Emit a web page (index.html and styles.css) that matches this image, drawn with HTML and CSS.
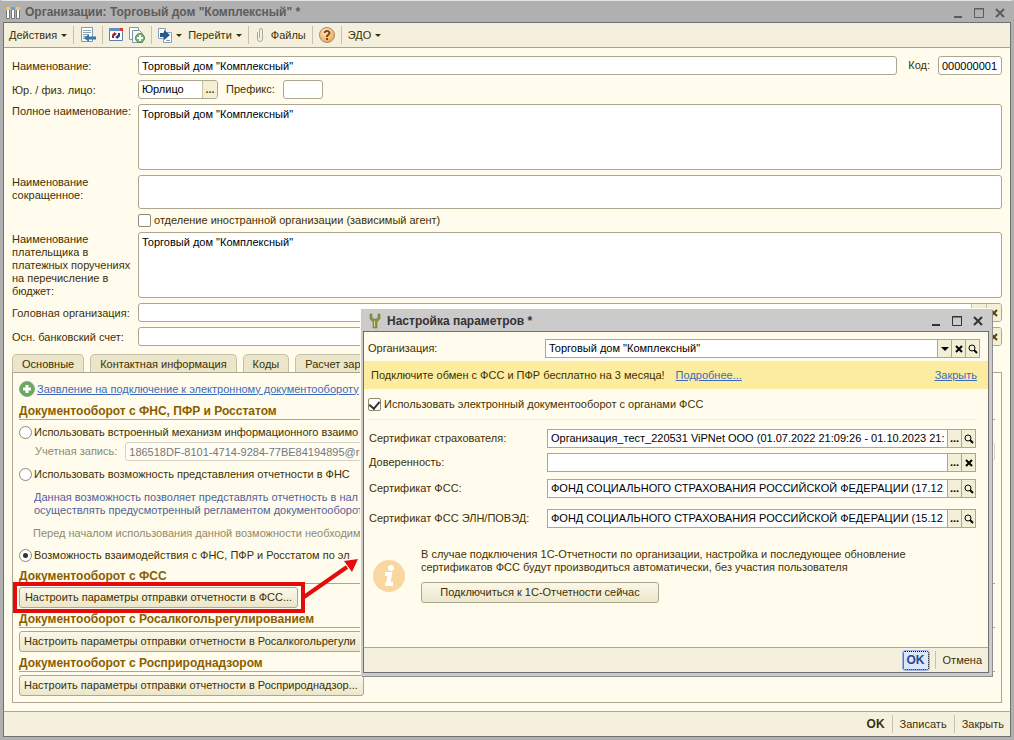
FILE: index.html
```html
<!DOCTYPE html>
<html lang="ru">
<head>
<meta charset="utf-8">
<title>Организации: Торговый дом "Комплексный"</title>
<link rel="stylesheet" href="styles.css">
</head>
<body>
<main class="window">
  <header class="titlebar">
    <svg class="icon" width="16" height="16" viewBox="0 0 16 16"><path fill="#fff" stroke="#777" d="M1.500 2.500h3v11h-3zM6.500 2.500h3v11h-3zM11.500 2.500h3v11h-3z"/><path fill="#f0c85a" d="M1 2h4v3H1zM11 2h4v3h-4z"/><path fill="#6f9fd0" d="M6 2h4v3H6z"/></svg>
    <h1 class="title">Организации: Торговый дом "Комплексный" *</h1>
    <div class="controls">
      <button class="control" aria-label="Свернуть"><svg width="12" height="12"><path d="M2 10h8" stroke="currentColor" stroke-width="2"/></svg></button>
      <button class="control" aria-label="Развернуть"><svg width="12" height="12"><path d="M1.500 1.500h9v9h-9zM1 2h10" fill="none" stroke="currentColor"/></svg></button>
      <button class="control" aria-label="Закрыть окно"><svg width="12" height="12"><path d="M2 2l8 8M10 2l-8 8" stroke="currentColor" stroke-width="2"/></svg></button>
    </div>
  </header>
  <nav class="toolbar">
    <button class="tool">Действия<span class="caret"></span></button>
    <span class="sep"></span>
    <button class="tool" aria-label="Записать и закрыть"><svg width="16" height="16"><path fill="#fff" stroke="#7899b8" d="M1.500.500h11v14h-11z"/><path stroke="#8fa3b5" d="M3 3.500h8M3 5.500h8M3 7.500h5M3 9.500h3M3 11.500h3"/><path fill="#3578a8" d="M4 11l5-4v2.500h7v3H9V15z"/></svg></button>
    <span class="sep"></span>
    <button class="tool" aria-label="Перечитать"><svg width="14" height="14"><path fill="#fff" stroke="#5a7fae" d="M.500.500h13v12H.500z"/><path fill="#5c90c8" d="M0 0h14v3H0z"/><path fill="#d33" d="M11 0h3v3h-3z"/><path fill="none" stroke="#a02030" stroke-width="2" d="M4 10V8q0-2 2-2"/><path fill="none" stroke="#203a90" stroke-width="2" d="M10 5v2q0 2-2 2"/><path fill="#a02030" d="M5 4l3 2-3 2z"/><path fill="#203a90" d="M9 7v4L6 9z"/></svg></button>
    <button class="tool" aria-label="Скопировать"><svg width="16" height="17"><path fill="#fff" stroke="#8396a5" d="M.500.500h9v12h-9z"/><path fill="#f4f8fa" stroke="#8396a5" d="M3.500 3.500h7l3 3v9h-10z"/><circle cx="11" cy="11" r="4.500" fill="#7db570" stroke="#4f8a4a"/><path stroke="#fff" stroke-width="2" d="M8 11h6M11 8v6"/></svg></button>
    <span class="sep"></span>
    <button class="tool" aria-label="Ввести на основании"><svg width="14" height="15"><path fill="#fff" stroke="#86a0b8" d="M.500.500h7v10h-7zM5.500 4.500h8v10h-8z"/><path fill="#25588c" d="M2 5h4V2l6 5-6 5V9H2z"/><path stroke="#86a0b8" d="M8 12.500h4"/></svg><span class="caret"></span></button>
    <button class="tool">Перейти<span class="caret"></span></button>
    <span class="sep"></span>
    <button class="tool files"><svg width="10" height="16"><path fill="none" stroke="#a8a8a4" d="M2.500 5v7q0 2.500 2.500 2.500T7.500 12V3Q7.500 1.500 6 1.500T4.500 3v8"/></svg>Файлы</button>
    <span class="sep"></span>
    <button class="tool" aria-label="Справка"><svg width="16" height="16"><defs><radialGradient id="orange" cx=".4" cy=".3" r=".8"><stop offset="0" stop-color="#ffe9c0"/><stop offset="1" stop-color="#f0a040"/></radialGradient></defs><circle cx="8" cy="8" r="7.500" fill="url(#orange)" stroke="#a08c78"/><path fill="none" stroke="#86471c" stroke-width="2" d="M5.500 6Q6 4 8 4t2.500 2Q10.500 7 8 9v1M8 11v2"/></svg></button>
    <span class="sep"></span>
    <button class="tool">ЭДО<span class="caret"></span></button>
  </nav>

  <form class="content">
    <div class="fields">
      <label for="name">Наименование:</label>
      <div class="line"><input id="name" class="box grow" value='Торговый дом "Комплексный"'><label class="codelabel" for="code">Код:</label><input id="code" class="box code" value="000000001"></div>
      <label for="kind">Юр. / физ. лицо:</label>
      <div class="line"><div class="box combo"><input id="kind" value="Юрлицо"><button type="button" aria-label="Выбрать">...</button></div><label class="preflabel" for="prefix">Префикс:</label><input id="prefix" class="box prefix"></div>
      <label class="top" for="full">Полное наименование:</label>
      <textarea id="full" class="box tall">Торговый дом "Комплексный"</textarea>
      <label class="top" for="short">Наименование сокращенное:</label>
      <textarea id="short" class="box short"></textarea>
      <label class="check second"><input type="checkbox">отделение иностранной организации (зависимый агент)</label>
      <label class="top" for="payer">Наименование плательщика в платежных поручениях на перечисление в бюджет:</label>
      <textarea id="payer" class="box tall">Торговый дом "Комплексный"</textarea>
      <label for="head">Головная организация:</label>
      <div class="box combo wide"><input id="head"><button type="button" aria-label="Выбрать организацию"></button><button type="button" class="clear" aria-label="Очистить организацию"><svg width="8" height="8"><path d="M1 1l6 6M7 1l-6 6" stroke="currentColor" stroke-width="2"/></svg></button></div>
      <label for="bank">Осн. банковский счет:</label>
      <div class="box combo wide"><input id="bank"><button type="button" aria-label="Выбрать счет"></button><button type="button" class="clear" aria-label="Очистить счет"><svg width="8" height="8"><path d="M1 1l6 6M7 1l-6 6" stroke="currentColor" stroke-width="2"/></svg></button></div>
    </div>

    <div class="tabs" role="tablist">
      <button type="button" class="tab" role="tab">Основные</button>
      <button type="button" class="tab" role="tab">Контактная информация</button>
      <button type="button" class="tab" role="tab">Коды</button>
      <button type="button" class="tab" role="tab">Расчет зарплаты</button>
    </div>
    <section class="panel">
      <div class="apply"><svg width="16" height="16"><circle cx="8" cy="8" r="7.500" fill="#68a85c" stroke="#8da98a"/><path stroke="#fff" stroke-width="3" d="M4 8h8M8 4v8"/></svg><a href="#">Заявление на подключение к электронному документообороту</a></div>
      <h2 class="heading">Документооборот с ФНС, ПФР и Росстатом</h2>
      <label class="radio"><input type="radio" name="mode">Использовать встроенный механизм информационного взаимо</label>
      <div class="account"><label for="account">Учетная запись:</label><input id="account" class="box grow" disabled value="186518DF-8101-4714-9284-77BE84194895@rep"></div>
      <label class="radio"><input type="radio" name="mode">Использовать возможность представления отчетности в ФНС</label>
      <p class="note">Данная возможность позволяет представлять отчетность в нал<br>осуществлять предусмотренный регламентом документооборот</p>
      <p class="hint">Перед началом использования данной возможности необходим</p>
      <label class="radio"><input type="radio" name="mode" checked>Возможность взаимодействия с ФНС, ПФР и Росстатом по эл</label>
      <h2 class="heading">Документооборот с ФСС</h2>
      <div class="marked"><button type="button" class="btn fss">Настроить параметры отправки отчетности в ФСС...</button>
        <svg class="arrow" width="56" height="44" viewBox="0 0 56 44"><path d="M0 41L43 11" stroke="#e30b0b" stroke-width="4"/><path d="M54 3L48 16 40 5z" fill="#e30b0b"/></svg>
      </div>
      <h2 class="heading">Документооборот с Росалкогольрегулированием</h2>
      <button type="button" class="btn nature">Настроить параметры отправки отчетности в Росалкогольрегули</button>
      <h2 class="heading">Документооборот с Росприроднадзором</h2>
      <button type="button" class="btn nature">Настроить параметры отправки отчетности в Росприроднадзор...</button>
    </section>
  </form>
  <footer class="footer">
    <button class="action strong">OK</button><span class="sep"></span><button class="action">Записать</button><span class="sep"></span><button class="action">Закрыть</button>
  </footer>
</main>

<div class="dialog" role="dialog" aria-labelledby="dialog-title">
  <header class="titlebar">
    <svg class="icon" width="16" height="16"><path fill="#8d9340" stroke="#6b7036" stroke-width=".5" d="M3 1v5l3 3v6h4V9l3-3V1h-2v4L9 6H7L5 5V1z"/><path fill="#d8d98c" d="M7 8h1v6H7z"/></svg>
    <h2 class="title" id="dialog-title">Настройка параметров *</h2>
    <div class="controls">
      <button class="control" aria-label="Свернуть"><svg width="12" height="12"><path d="M2 10h8" stroke="currentColor" stroke-width="2"/></svg></button>
      <button class="control" aria-label="Развернуть"><svg width="12" height="12"><path d="M1.500 1.500h9v9h-9zM1 2h10" fill="none" stroke="currentColor"/></svg></button>
      <button class="control" aria-label="Закрыть окно"><svg width="12" height="12"><path d="M2 2l8 8M10 2l-8 8" stroke="currentColor" stroke-width="2"/></svg></button>
    </div>
  </header>
  <form class="dialog-body">
    <div class="org"><label for="org">Организация:</label>
      <div class="picker"><input id="org" value='Торговый дом "Комплексный"'><button type="button" aria-label="Список"><span class="caret big"></span></button><button type="button" aria-label="Очистить"><svg width="8" height="8"><path d="M1 1l6 6M7 1l-6 6" stroke="currentColor" stroke-width="2"/></svg></button><button type="button" aria-label="Открыть"><svg width="10" height="10"><circle cx="4" cy="4" r="3" fill="none" stroke="currentColor"/><path d="M6 6l3 3" stroke="currentColor" stroke-width="2"/></svg></button></div>
    </div>
    <div class="banner"><span>Подключите обмен с ФСС и ПФР бесплатно на 3 месяца!</span><a href="#">Подробнее...</a><a class="dismiss" href="#">Закрыть</a></div>
    <div class="use"><label class="check"><input type="checkbox" checked>Использовать электронный документооборот с органами ФСС</label></div>
    <div class="certs">
      <label for="c1">Сертификат страхователя:</label>
      <div class="picker"><input id="c1" value="Организация_тест_220531 ViPNet ООО (01.07.2022 21:09:26 - 01.10.2023 21:19:26)"><button type="button" aria-label="Выбрать">...</button><button type="button" aria-label="Открыть"><svg width="10" height="10"><circle cx="4" cy="4" r="3" fill="none" stroke="currentColor"/><path d="M6 6l3 3" stroke="currentColor" stroke-width="2"/></svg></button></div>
      <label for="c2">Доверенность:</label>
      <div class="picker"><input id="c2"><button type="button" aria-label="Выбрать">...</button><button type="button" aria-label="Очистить"><svg width="8" height="8"><path d="M1 1l6 6M7 1l-6 6" stroke="currentColor" stroke-width="2"/></svg></button></div>
      <label class="spaced" for="c3">Сертификат ФСС:</label>
      <div class="picker spaced"><input id="c3" value="ФОНД СОЦИАЛЬНОГО СТРАХОВАНИЯ РОССИЙСКОЙ ФЕДЕРАЦИИ (17.12."><button type="button" aria-label="Выбрать">...</button><button type="button" aria-label="Открыть"><svg width="10" height="10"><circle cx="4" cy="4" r="3" fill="none" stroke="currentColor"/><path d="M6 6l3 3" stroke="currentColor" stroke-width="2"/></svg></button></div>
      <label class="spaced" for="c4">Сертификат ФСС ЭЛН/ПОВЭД:</label>
      <div class="picker spaced"><input id="c4" value="ФОНД СОЦИАЛЬНОГО СТРАХОВАНИЯ РОССИЙСКОЙ ФЕДЕРАЦИИ (15.12."><button type="button" aria-label="Выбрать">...</button><button type="button" aria-label="Открыть"><svg width="10" height="10"><circle cx="4" cy="4" r="3" fill="none" stroke="currentColor"/><path d="M6 6l3 3" stroke="currentColor" stroke-width="2"/></svg></button></div>
    </div>
    <div class="info">
      <svg width="32" height="32"><circle cx="16" cy="16" r="16" fill="#fad7a0"/><circle cx="18" cy="8" r="3" fill="#fff"/><path fill="none" stroke="#fff" stroke-width="4" d="M12 14h5l-2 10h5"/><path stroke="#fff" stroke-width="3" d="M12 24h5"/></svg>
      <div><p>В случае подключения 1С-Отчетности по организации, настройка и последующее обновление<br>сертификатов ФСС будут производиться автоматически, без участия пользователя</p>
      <button type="button" class="btn connect">Подключиться к 1С-Отчетности сейчас</button></div>
    </div>
  </form>
  <footer class="footer"><button class="action strong focused">OK</button><span class="sep"></span><button class="action">Отмена</button></footer>
</div>
</body>
</html>
```

FILE: styles.css
```css
* { box-sizing: border-box; }
body {
  margin: 0;
  font: 11px/13px "Liberation Sans", Arial, sans-serif;
  color: #3f3000;
  background: #b0b0b0;
}
button, input, textarea { font: inherit; color: inherit; margin: 0; padding: 0; }
button { background: none; border: 0; white-space: nowrap; }
h1, h2, p { margin: 0; }
svg { display: block; flex: none; }
a { color: #3a6bbd; }

.window {
  min-height: 100vh;
  display: flex;
  flex-direction: column;
  border: 3px solid #b0b0b0;
  border-top: 1px solid #e4e4e4;
}
.titlebar {
  display: flex;
  align-items: center;
  gap: 4px;
  height: 22px;
  padding: 2px 5px 0 2px;
  background: #b0b0b0;
  border-bottom: 1px solid #6f6f6f;
  color: #5c5c5c;
}
.title { flex: 1; font-size: 12px; font-weight: bold; }
.controls { display: flex; gap: 9px; }
.control { width: 12px; height: 12px; }
.toolbar {
  display: flex;
  align-items: center;
  gap: 6px;
  height: 25px;
  padding-left: 5px;
  background: #f5f0de;
  border: solid #6f6f6f;
  border-width: 0 1px;
  border-bottom: 1px solid #a9a186;
}
.tool { display: flex; align-items: center; gap: 4px; }
.files { gap: 6px; }
.caret { border: 3px solid transparent; border-top-color: currentColor; border-bottom: 0; }
.big { border-width: 4px; border-bottom: 0; }
.sep { width: 1px; height: 18px; background: #c6c2b0; }

.content {
  flex: 1;
  padding: 8px;
  background: #fffcee;
  border: solid #6f6f6f;
  border-width: 0 1px;
}
.fields {
  display: grid;
  grid-template-columns: 121px 1fr;
  gap: 5px;
  align-items: center;
}
.fields > label { padding-top: 1px; }
.top { align-self: start; }
.second { grid-column: 2; height: 13px; }
.fields > .second { padding-top: 0; }
.line { display: flex; align-items: center; }
.box {
  min-width: 0;
  height: 19px;
  padding: 0 3px;
  background: #fff;
  border: 1px solid #ada78f;
  border-radius: 3px;
  color: #000;
}
textarea.box { display: block; width: 100%; padding: 3px; resize: none; }
textarea.tall { height: 66px; }
textarea.short { height: 34px; }
.grow { flex: 1; }
.codelabel { margin: 0 8px 0 11px; }
.code { width: 64px; }
.preflabel { margin: 0 8px; }
.prefix { width: 40px; }
.combo { display: flex; width: 80px; padding: 0 0 0 3px; overflow: hidden; }
.combo.wide { width: 100%; }
.combo input { flex: 1; min-width: 0; border: 0; background: none; }
.combo button { width: 15px; background: #f3eed6; border-left: 1px solid #c9c4a8; color: #5b4300; font-weight: bold; }
.combo .clear { display: grid; place-items: center; }

.check, .radio { display: flex; align-items: center; gap: 3px; }
.check input, .radio input {
  appearance: none;
  flex: none;
  display: grid;
  place-items: center;
  width: 13px;
  height: 13px;
  background: #fff;
  border: 1px solid #8d8a78;
  border-radius: 2px;
}
.radio input { border-radius: 50%; }
.radio input:checked::before { content: ""; width: 5px; height: 5px; border-radius: 50%; background: #333; }
.check input:checked::before {
  content: "";
  width: 5px;
  height: 8px;
  margin-bottom: 2px;
  border: solid #333;
  border-width: 0 2px 2px 0;
  transform: rotate(40deg);
}

.tabs { display: flex; gap: 6px; margin-top: 8px; }
.tab {
  height: 18px;
  padding: 1px 9px 0;
  background: #ebe5c9;
  border: 1px solid #c6c0a4;
  border-bottom: 0;
  border-radius: 5px 5px 0 0;
}
.panel { padding: 8px 6px 6px; border: 1px solid #ada78f; white-space: nowrap; }
.apply { display: flex; align-items: center; gap: 2px; }
.heading {
  height: 23px;
  padding-top: 8px;
  border-bottom: 1px solid #ada78f;
  font-size: 12px;
  color: #8a5e00;
}
.radio { height: 14px; margin-top: 5px; gap: 2px; }
.account { display: flex; align-items: center; gap: 8px; margin: 3px 0 6px 16px; color: #8f8a68; }
.account .box { background: #fffdf4; border-color: #d5d2c2; color: #777; }
.note { margin: 10px 0 0 15px; color: #52619a; }
.hint { margin: 10px 0 0 14px; color: #8f8a68; }
.hint + .radio { margin-top: 8px; }
.radio + .heading { height: 22px; }
.btn {
  display: block;
  height: 21px;
  margin-top: 3px;
  padding: 0 4px;
  background: linear-gradient(#fbf8e9, #ece6cb);
  border: 1px solid #ada78f;
  border-radius: 3px;
}
.btn + .heading, .marked + .heading { height: 20px; padding-top: 5px; }
.fss { width: 279px; }
.nature { width: 345px; text-align: left; }
.marked { position: relative; width: 280px; }
.marked::after {
  content: "";
  position: absolute;
  inset: -5px -6px;
  border: 4px solid #e30b0b;
}
.arrow { position: absolute; left: 285px; bottom: 8px; }

.footer {
  display: flex;
  align-items: center;
  justify-content: flex-end;
  gap: 6px;
  height: 26px;
  padding-right: 5px;
  background: #f5f0de;
  border: 1px solid #6f6f6f;
  border-top-color: #ada78f;
}
.action { padding: 2px 1px; }
.strong { font-size: 12px; font-weight: bold; }

.dialog {
  position: absolute;
  left: 361px;
  top: 309px;
  width: 631px;
  border: solid #cbcbcb;
  border-width: 0 3px 3px 2px;
  box-shadow: 1px 1px #8f8f8f, -1px -1px #fffcee;
}
.dialog .titlebar { background: #cbcbcb; color: #333; height: 23px; padding-left: 4px; }
.dialog-body { background: #fffcee; border: solid #6f6f6f; border-width: 0 1px; padding-top: 7px; }
.org { display: grid; grid-template-columns: 177px 1fr; align-items: center; padding: 0 8px 0 4px; }
.picker { display: flex; height: 19px; background: #fff; border: 1px solid #ada78f; color: #000; }
.picker input { flex: 1; min-width: 0; padding: 0 3px; border: 0; background: none; }
.picker button {
  display: grid;
  place-items: center;
  width: 14px;
  background: #f3eed6;
  border-left: 1px solid #ada78f;
  font-weight: bold;
}
.banner {
  display: flex;
  align-items: center;
  gap: 11px;
  height: 28px;
  margin-top: 3px;
  padding: 0 11px 0 7px;
  background: #fcec9f;
}
.dismiss { margin-left: auto; }
.use { margin: 0 12px 0 4px; padding: 9px 0 8px; border-bottom: 1px solid #f1eee2; }
.certs {
  display: grid;
  grid-template-columns: 178px 1fr;
  row-gap: 5px;
  align-items: center;
  padding: 9px 12px 0 5px;
}
.certs .spaced { margin-top: 2px; }
.certs .spaced ~ .spaced ~ .spaced { margin-top: 6px; }
.info { display: flex; align-items: center; gap: 16px; padding: 20px 8px 44px 9px; }
.connect { width: 238px; margin-top: 8px; }
.focused {
  padding: 2px 3px;
  background: #dce7fb;
  border: 1px dotted #000;
  outline: 1px solid #9db5e6;
  border-radius: 2px;
  color: #2c4788;
}
```
